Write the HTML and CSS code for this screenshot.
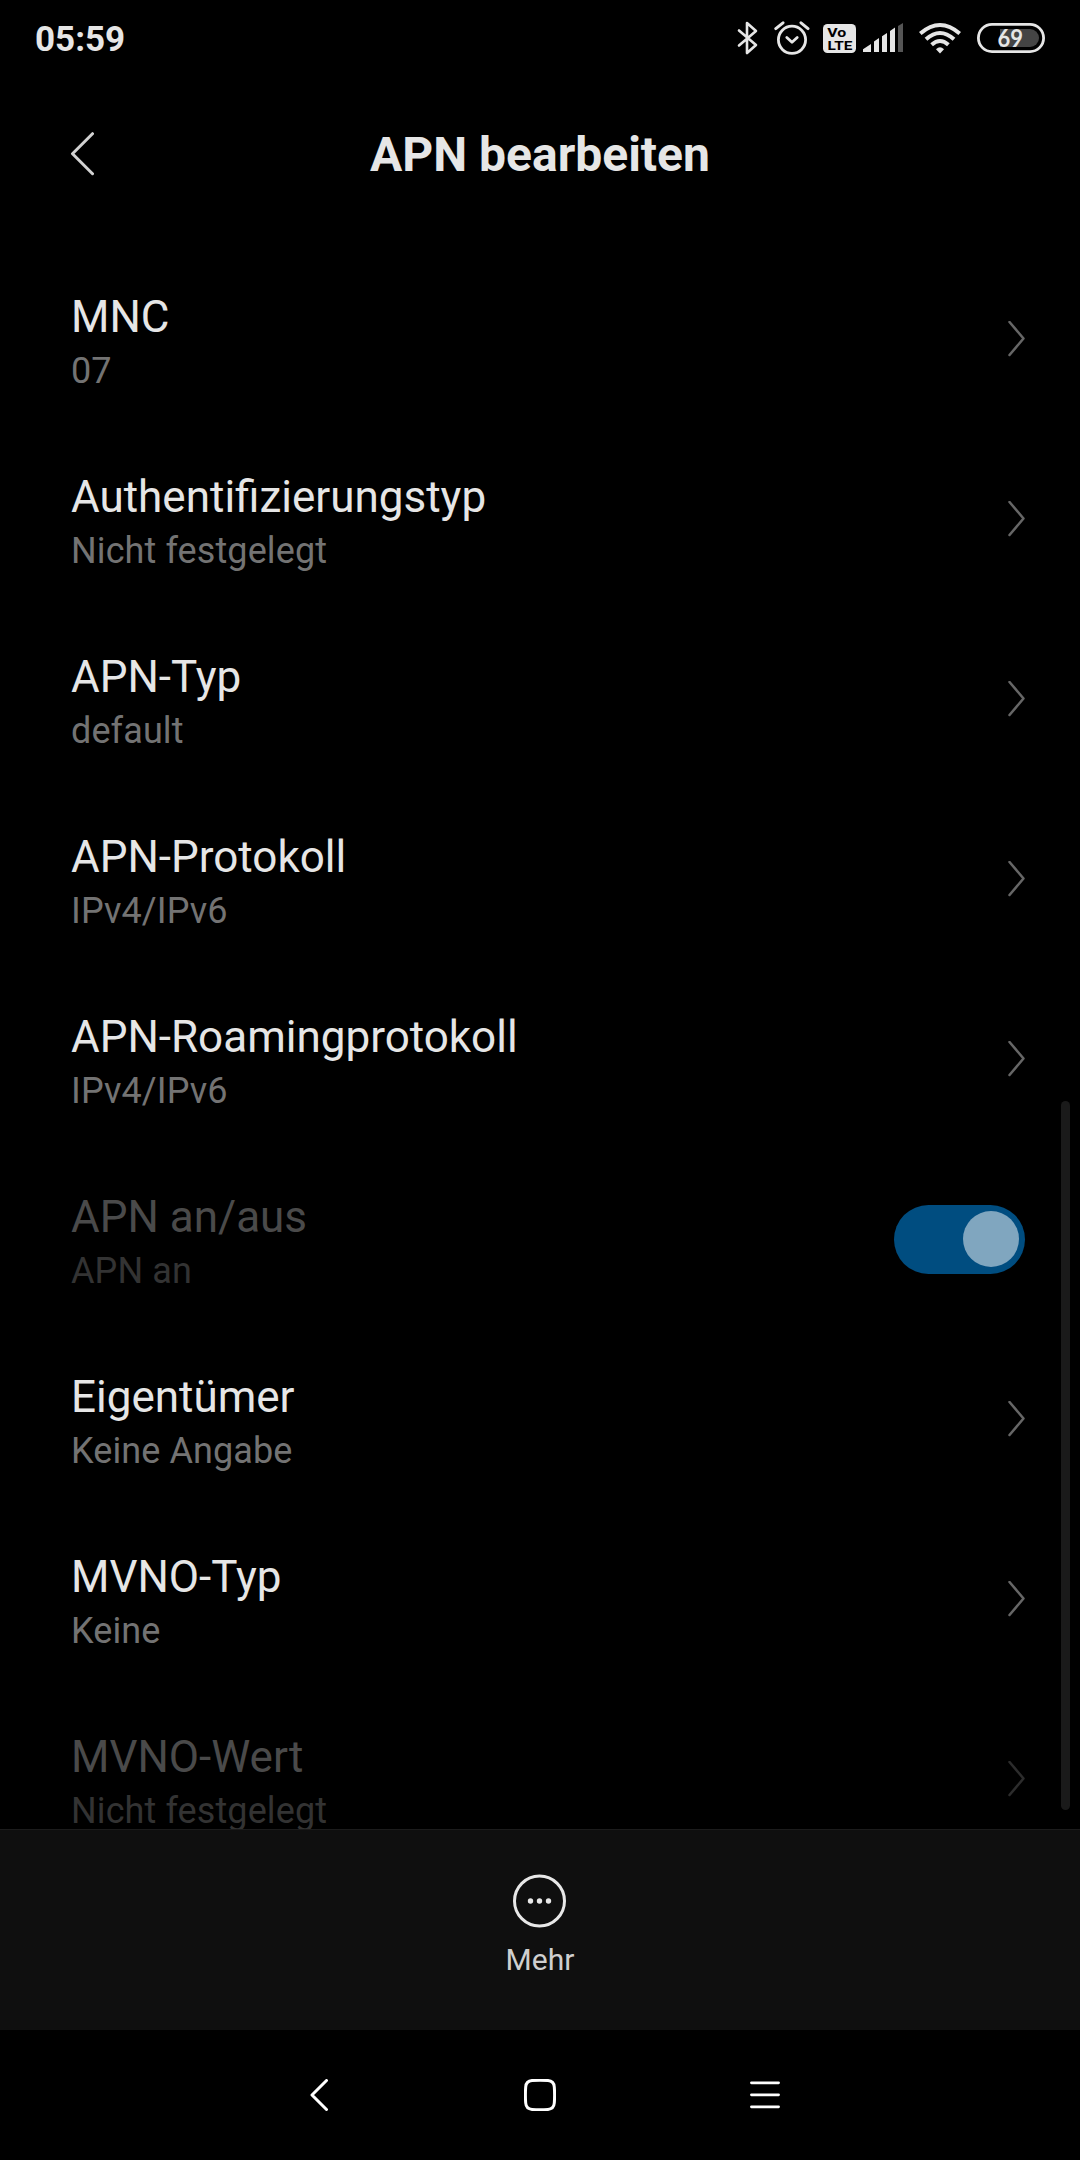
FILE: index.html
```html
<!DOCTYPE html>
<html lang="de">
<head>
    <meta charset="UTF-8">
    <meta name="viewport" content="width=device-width, initial-scale=1.0">
    <title>APN bearbeiten</title>
    <link rel="stylesheet" href="styles.css">
</head>
<body>
    <div class="screen">
        <div class="status-bar">
            <span class="clock">05:59</span>
            <div class="status-icons">
                <svg class="icon-bluetooth" width="22" height="36" viewBox="0 0 22 36">
                    <path d="M2 10.5 L19 25 L10 33 V3 L19 11 L2 25.5" fill="none" stroke="#e6e6e6" stroke-width="2.6" stroke-linecap="round" stroke-linejoin="round"/>
                </svg>
                <svg class="icon-alarm" width="36" height="36" viewBox="0 0 36 36">
                    <g fill="none" stroke="#e6e6e6" stroke-linecap="round" stroke-linejoin="round">
                        <circle cx="18" cy="19.8" r="13.6" stroke-width="2.8"/>
                        <path d="M12.8 17.5 L18 22.3 L23.2 17.5" stroke-width="2.8"/>
                        <path d="M1.8 8.6 L9 2.8 M27 2.8 L34 8.6" stroke-width="3"/>
                    </g>
                </svg>
                <svg class="icon-volte" width="33" height="36" viewBox="0 0 33 36">
                    <rect x="0" y="4" width="33" height="29" rx="4.5" fill="#e6e6e6"/>
                    <text class="volte-text" x="4.3" y="16.7" textLength="19" lengthAdjust="spacingAndGlyphs">Vo</text>
                    <text class="volte-text" x="4.6" y="29.6" textLength="24.8" lengthAdjust="spacingAndGlyphs">LTE</text>
                </svg>
                <svg class="icon-signal" width="40" height="36" viewBox="0 0 40 36">
                    <path d="M0 32 V29.3 L8 24 V32 Z M11 32 V21.5 L16 18 V32 Z M19 32 V16.3 L24 13 V32 Z M27 32 V11 L32 7.5 V32 Z" fill="#e6e6e6"/>
                    <path d="M35 32 V6 L40 3 V32 Z" fill="#555"/>
                </svg>
                <svg class="icon-wifi" width="42" height="36" viewBox="0 0 42 36">
                    <g fill="none" stroke="#e6e6e6" stroke-width="4">
                        <path d="M1.3 13.5 Q21 -3.5 40.7 13.5"/>
                        <path d="M7 19.3 Q21 6.7 35 19.3"/>
                        <path d="M12.6 24.7 Q21 17.3 29.4 24.7"/>
                    </g>
                    <path d="M17 29.3 Q21 25.3 25 29.3 L21 33.4 Z" fill="#e6e6e6"/>
                </svg>
                <svg class="icon-battery" width="68" height="36" viewBox="0 0 68 36">
                    <path d="M23 9 H53 A9 9 0 0 1 53 27 H23 Z" fill="#444"/>
                    <rect x="1.4" y="4.4" width="65.2" height="27.2" rx="13.6" fill="none" stroke="#e6e6e6" stroke-width="2.8"/>
                    <text class="battery-text" x="20.6" y="26.7" textLength="25.5" lengthAdjust="spacingAndGlyphs">69</text>
                </svg>
            </div>
        </div>

        <div class="header">
            <svg class="back" width="24" height="44" viewBox="0 0 24 44">
                <path d="M22.5 1.7 L2.5 21.7 L22.5 41.7" fill="none" stroke="#d2d2d2" stroke-width="3" stroke-linecap="round" stroke-linejoin="round"/>
            </svg>
            <h1>APN bearbeiten</h1>
        </div>

        <div class="list">
            <div class="row">
                <div class="row-text"><h2>MNC</h2><p>07</p></div>
                <svg class="chevron" viewBox="0 0 17 36"><path d="M1.5 1 L15.5 17.5 L1.5 34"/></svg>
            </div>
            <div class="row">
                <div class="row-text"><h2>Authentifizierungstyp</h2><p>Nicht festgelegt</p></div>
                <svg class="chevron" viewBox="0 0 17 36"><path d="M1.5 1 L15.5 17.5 L1.5 34"/></svg>
            </div>
            <div class="row">
                <div class="row-text"><h2>APN-Typ</h2><p>default</p></div>
                <svg class="chevron" viewBox="0 0 17 36"><path d="M1.5 1 L15.5 17.5 L1.5 34"/></svg>
            </div>
            <div class="row">
                <div class="row-text"><h2>APN-Protokoll</h2><p>IPv4/IPv6</p></div>
                <svg class="chevron" viewBox="0 0 17 36"><path d="M1.5 1 L15.5 17.5 L1.5 34"/></svg>
            </div>
            <div class="row">
                <div class="row-text"><h2>APN-Roamingprotokoll</h2><p>IPv4/IPv6</p></div>
                <svg class="chevron" viewBox="0 0 17 36"><path d="M1.5 1 L15.5 17.5 L1.5 34"/></svg>
            </div>
            <div class="row disabled">
                <div class="row-text"><h2>APN an/aus</h2><p>APN an</p></div>
                <div class="toggle"><div class="thumb"></div></div>
            </div>
            <div class="row">
                <div class="row-text"><h2>Eigentümer</h2><p>Keine Angabe</p></div>
                <svg class="chevron" viewBox="0 0 17 36"><path d="M1.5 1 L15.5 17.5 L1.5 34"/></svg>
            </div>
            <div class="row">
                <div class="row-text"><h2>MVNO-Typ</h2><p>Keine</p></div>
                <svg class="chevron" viewBox="0 0 17 36"><path d="M1.5 1 L15.5 17.5 L1.5 34"/></svg>
            </div>
            <div class="row disabled">
                <div class="row-text"><h2>MVNO-Wert</h2><p>Nicht festgelegt</p></div>
                <svg class="chevron" viewBox="0 0 17 36"><path d="M1.5 1 L15.5 17.5 L1.5 34"/></svg>
            </div>
            <div class="scrollbar"></div>
        </div>

        <div class="action-bar">
            <svg width="54" height="54" viewBox="0 0 54 54">
                <circle cx="26.5" cy="27" r="25" fill="none" stroke="#e8e8e8" stroke-width="3"/>
                <g fill="#e8e8e8">
                    <circle cx="17.5" cy="27" r="2.7"/>
                    <circle cx="26.5" cy="27" r="2.7"/>
                    <circle cx="35.5" cy="27" r="2.7"/>
                </g>
            </svg>
            <span>Mehr</span>
        </div>

        <div class="nav-bar">
            <svg width="32" height="32" viewBox="0 0 32 32">
                <path d="M27.5 1.5 L13 16 L27.5 30.5" fill="none" stroke="#fff" stroke-width="3" stroke-linecap="round" stroke-linejoin="round"/>
            </svg>
            <svg width="32" height="32" viewBox="0 0 32 32">
                <path d="M8 1.6 Q16 1 24 1.6 Q29.9 2.1 30.3 8 Q30.9 16 30.3 24 Q29.9 29.9 24 30.4 Q16 31 8 30.4 Q2.1 29.9 1.7 24 Q1.1 16 1.7 8 Q2.1 2.1 8 1.6 Z" fill="none" stroke="#fff" stroke-width="3"/>
            </svg>
            <svg width="32" height="32" viewBox="0 0 32 32">
                <path d="M2.4 3.8 H29.6 M2.4 15.8 H29.6 M2.4 27.8 H29.6" fill="none" stroke="#fff" stroke-width="2.7" stroke-linecap="round"/>
            </svg>
        </div>
    </div>
</body>
</html>
```
FILE: styles.css
```css
* {
    margin: 0;
    padding: 0;
    box-sizing: border-box;
}
body {
    background: #000;
    color: #e6e6e6;
    font-family: Roboto, "Noto Sans", sans-serif;
}
svg {
    display: block;
    flex-shrink: 0;
}
.screen {
    display: flex;
    flex-direction: column;
    width: 1080px;
    height: 2160px;
    overflow: hidden;
}

/* status bar */
.status-bar {
    display: flex;
    justify-content: space-between;
    height: 76px;
    padding: 20px 35px 0;
}
.clock {
    font-size: 35px;
    line-height: 39px;
    font-weight: 700;
}
.status-icons {
    display: flex;
}
.icon-bluetooth {
    margin-right: 15px;
}
.icon-alarm {
    margin-right: 13px;
}
.icon-volte {
    margin-right: 7px;
}
.icon-signal,
.icon-wifi {
    margin-right: 16px;
}
.volte-text {
    font: 700 13px Roboto, sans-serif;
    fill: #000;
}
.battery-text {
    font: 700 24px Lato, sans-serif;
    fill: #e6e6e6;
}

/* header */
.header {
    display: grid;
    grid-template-columns: 94px 1fr 94px;
    align-items: center;
    height: 173px;
    padding-bottom: 18px;
}
.back {
    justify-self: end;
}
.header h1 {
    padding-top: 2px;
    text-align: center;
    font-size: 48px;
    line-height: 56px;
    font-weight: 700;
}

/* list */
.list {
    position: relative;
    flex: 1;
    min-height: 0;
    overflow: hidden;
}
.row {
    display: flex;
    justify-content: space-between;
    align-items: center;
    height: 180px;
    padding: 0 55px 0 71px;
}
.row-text {
    padding-top: 5px;
}
.row h2 {
    font-size: 44px;
    line-height: 52px;
    font-weight: 400;
}
.row p {
    margin-top: 7px;
    color: #737373;
    font-size: 36px;
    line-height: 42px;
    letter-spacing: 0.1px;
}
.chevron {
    width: 17px;
    height: 36px;
    fill: none;
    stroke: #666;
    stroke-width: 2.5;
    stroke-linecap: round;
    stroke-linejoin: round;
}
.disabled h2 {
    color: #4a4a4a;
}
.disabled p {
    color: #333;
}
.disabled .chevron {
    stroke: #2c2c2c;
}
.toggle {
    display: flex;
    align-items: center;
    justify-content: flex-end;
    width: 131px;
    height: 69px;
    padding-right: 6px;
    border-radius: 35px;
    background: #004d80;
}
.thumb {
    width: 56px;
    height: 56px;
    border-radius: 50%;
    background: #80a6bf;
}
.scrollbar {
    position: absolute;
    top: 852px;
    right: 10px;
    width: 9px;
    height: 709px;
    border-radius: 5px;
    background: #1a1a1a;
}

/* bottom */
.action-bar {
    display: flex;
    flex-direction: column;
    align-items: center;
    height: 201px;
    padding-top: 44px;
    border-top: 1px solid #1c1c1c;
    background: #0f0f0f;
}
.action-bar span {
    margin-top: 14px;
    color: #cfcfcf;
    font-size: 30px;
    line-height: 35px;
}
.nav-bar {
    display: flex;
    justify-content: center;
    align-items: center;
    gap: 193px;
    height: 130px;
}
```
